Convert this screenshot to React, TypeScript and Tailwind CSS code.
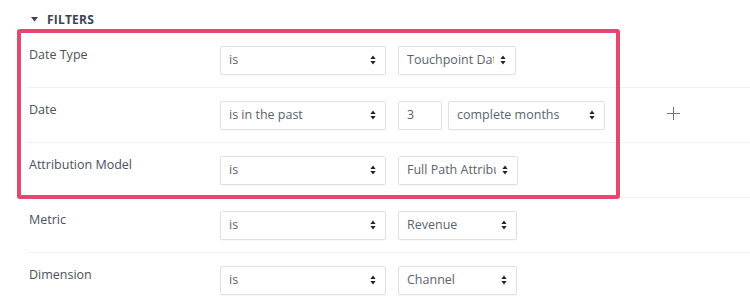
import React from "react";

const Arrows = () => (
  <svg width="6" height="10" viewBox="0 0 6 10" className="shrink-0">
    <path d="M3 0.5 L5.6 4 H0.4 Z" fill="#1f2328" />
    <path d="M3 9.5 L5.6 6 H0.4 Z" fill="#1f2328" />
  </svg>
);

const Select = ({ value, width }: { value: string; width: string }) => (
  <div
    className={`${width} h-[29px] flex items-center justify-between border border-[#dfe1e4] rounded-[2px] bg-white pl-[8px] pr-[9px] shadow-[0_1px_1px_rgba(0,0,0,0.03)]`}
  >
    <span className="text-[12.5px] text-[#5b636d] whitespace-nowrap overflow-hidden mr-[6px]">
      {value}
    </span>
    <Arrows />
  </div>
);

const Row = ({ label, children }: { label: string; children: React.ReactNode }) => (
  <div className="h-[55px] flex items-center border-b border-[#eff1f3]">
    <div className="w-[193px] self-start pt-[13px] pl-[2px] text-[12.5px] text-[#49515c]">
      {label}
    </div>
    <div className="flex items-center gap-[12px]">{children}</div>
  </div>
);

export default function App() {
  return (
    <div className="relative w-[750px] h-[304px] bg-white overflow-hidden font-['Open_Sans',sans-serif]">
      <div className="flex items-center gap-[9px] pt-[10px] pl-[31px] h-[33px] pb-[4px]">
        <svg width="7" height="5" viewBox="0 0 7 5">
          <path d="M0 0 H7 L3.5 4.5 Z" fill="#3b4451" />
        </svg>
        <span className="text-[12px] font-bold tracking-[0.2px] text-[#3b4451]">FILTERS</span>
      </div>

      <div className="ml-[27px]">
        <Row label="Date Type">
          <Select value="is" width="w-[166px]" />
          <Select value="Touchpoint Date" width="w-[118px]" />
        </Row>
        <Row label="Date">
          <Select value="is in the past" width="w-[166px]" />
          <div className="flex items-center gap-[6px]">
            <div className="w-[44px] h-[29px] flex items-center border border-[#dfe1e4] rounded-[2px] pl-[8px] text-[12.5px] text-[#5b636d]">
              3
            </div>
            <Select value="complete months" width="w-[157px]" />
          </div>
          <svg width="13" height="13" viewBox="0 0 13 13" className="ml-[50px] -mt-[4px]">
            <path d="M6.5 0 V13 M0 6.5 H13" stroke="#6d747c" strokeWidth="1" />
          </svg>
        </Row>
        <Row label="Attribution Model">
          <Select value="is" width="w-[166px]" />
          <Select value="Full Path Attribution" width="w-[120px]" />
        </Row>
        <Row label="Metric">
          <Select value="is" width="w-[166px]" />
          <Select value="Revenue" width="w-[119px]" />
        </Row>
        <Row label="Dimension">
          <Select value="is" width="w-[166px]" />
          <Select value="Channel" width="w-[119px]" />
        </Row>
      </div>

      <div className="absolute left-[17px] top-[29px] w-[603px] h-[170px] border-[4px] border-[#e6476f] rounded-[3px] pointer-events-none" />
    </div>
  );
}
